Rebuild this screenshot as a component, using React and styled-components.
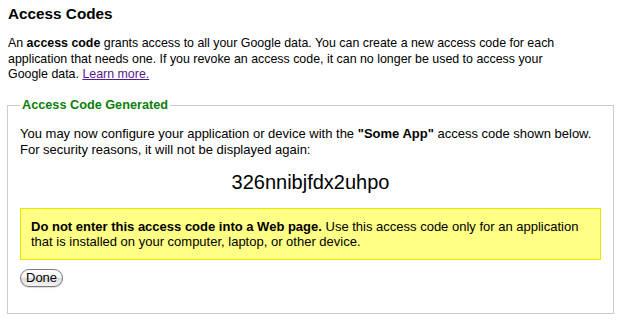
import React from "react";
import styled, { createGlobalStyle } from "styled-components";

const Global = createGlobalStyle`
  html, body { margin: 0; padding: 0; background: #fff; }
  body { font-family: "Liberation Sans", Arial, sans-serif; color: #000; }
`;

const Page = styled.div`
  padding: 4px 8px 0 8px;
  font-size: 13px;
  line-height: 15.6px;
`;

const Title = styled.h2`
  margin: 0;
  font-size: 15.3px;
  line-height: 19px;
  font-weight: bold;
`;

const Intro = styled.p`
  margin: 13px 0 0 0;
  font-size: 12.4px;
  line-height: 15.6px;
`;

const Link = styled.a`
  color: #551a8b;
  text-decoration: underline;
`;

const Panel = styled.fieldset`
  margin: 15px -2px 0 -1px;
  padding: 12px 12px 26px 12px;
  border: 1px solid #cccccc;
  min-width: 0;
`;

const Legend = styled.legend`
  padding: 0 2px;
  color: #0b7f08;
  font-weight: bold;
  font-size: 12.7px;
  line-height: 15.6px;
`;

const Text = styled.p`
  margin: 1px 0 0 0;
`;

const Code = styled.div`
  margin-top: 12px;
  text-align: center;
  font-size: 20px;
  line-height: 24px;
`;

const Warning = styled.div`
  margin-top: 14px;
  padding: 10px 10px 9px 10px;
  background: #ffff86;
  border: 1px solid #e6e600;
`;

const Button = styled.button`
  margin-top: 9px;
  height: 18px;
  padding: 0 5px;
  font-family: "Liberation Sans", Arial, sans-serif;
  font-size: 13px;
  line-height: 16px;
  color: #000;
  border: 1px solid #7a7a7a;
  border-radius: 9px;
  background: linear-gradient(#ffffff 0%, #f2f2f2 50%, #dcdcdc 51%, #f4f4f4 100%);
  box-shadow: 0 1px 1px rgba(0,0,0,0.15);
  display: block;
`;

export default function App() {
  return (
    <>
      <Global />
      <Page>
        <Title>Access Codes</Title>
        <Intro>
          An <b>access code</b> grants access to all your Google data. You can create a new access code for each
          <br />
          application that needs one. If you revoke an access code, it can no longer be used to access your
          <br />
          Google data. <Link href="#">Learn more.</Link>
        </Intro>
        <Panel>
          <Legend>Access Code Generated</Legend>
          <Text>
            You may now configure your application or device with the <b>"Some App"</b> access code shown below.
            <br />
            For security reasons, it will not be displayed again:
          </Text>
          <Code>326nnibjfdx2uhpo</Code>
          <Warning>
            <b>Do not enter this access code into a Web page.</b> Use this access code only for an application
            <br />
            that is installed on your computer, laptop, or other device.
          </Warning>
          <Button type="button">Done</Button>
        </Panel>
      </Page>
    </>
  );
}
